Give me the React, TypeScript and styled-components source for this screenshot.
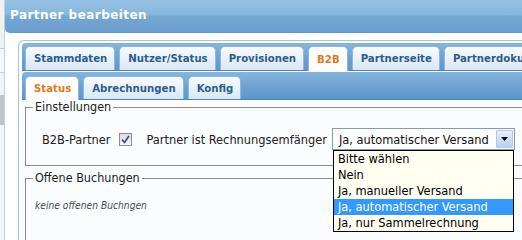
import React from "react";
import styled, { createGlobalStyle } from "styled-components";

const Global = createGlobalStyle`
  html, body { margin: 0; padding: 0; background: #fff; overflow: hidden; }
  body { font-family: "DejaVu Sans Condensed", "DejaVu Sans", Verdana, sans-serif; font-stretch: condensed; font-size: 12.7px; color: #1e1e1e; }
`;

const Page = styled.div`
  display: flex;
  width: 522px;
  height: 240px;
  overflow: hidden;
`;

const Backdrop = styled.div`
  width: 4px;
  flex: none;
  display: flex;
  flex-direction: column;
  background: #f3f3f3;
`;

const BackdropBand = styled.div<{ $h: number; $c: string }>`
  flex: none;
  height: ${(p) => p.$h}px;
  background: ${(p) => p.$c};
`;

const Dialog = styled.div`
  flex: 1;
  min-width: 0;
  display: flex;
  flex-direction: column;
  border-left: 1px solid #b9d3ea;
  background: #fff;
`;

const Header = styled.div`
  flex: none;
  height: 33px;
  box-sizing: border-box;
  padding: 8px 0 0 5px;
  border-bottom-left-radius: 5px;
  background: linear-gradient(180deg, #95c1e3 0%, #88b7de 45%, #73a7d4 52%, #6a9fd0 100%);
  border-bottom: 1px solid #6196c8;
  color: #fff;
  font-family: "DejaVu Sans", Verdana, sans-serif;
  font-stretch: normal;
  font-weight: bold;
  font-size: 12px;
  letter-spacing: 0.45px;
  line-height: 15px;
`;

const Body = styled.div`
  flex: 1;
  min-height: 0;
  padding: 7px 0 0 13px;
  display: flex;
  flex-direction: column;
`;

const TabWidget = styled.div`
  flex: 1;
  display: flex;
  flex-direction: column;
  border: 1px solid #a0c5e7;
  border-right: none;
  border-bottom: none;
  border-top-left-radius: 6px;
  padding: 2px 0 0 3px;
`;

const TabBar = styled.div<{ $top: number }>`
  flex: none;
  display: flex;
  align-items: flex-end;
  gap: 4px;
  height: 28px;
  box-sizing: border-box;
  padding: ${(p) => p.$top}px 0 0 3px;
  background: linear-gradient(180deg, #86b5df 0%, #6a9fd1 60%, #5f96cb 100%);
  border-top-left-radius: 4px;
  box-shadow: inset 0 -1px 0 #4a86c0;
  white-space: nowrap;
  overflow: hidden;
`;

const Tab = styled.div<{ $active?: boolean; $h: number }>`
  flex: none;
  box-sizing: border-box;
  height: ${(p) => (p.$active ? p.$h + 1 : p.$h)}px;
  margin-bottom: ${(p) => (p.$active ? 0 : 1)}px;
  padding: 0 7px 0 8px;
  display: flex;
  align-items: center;
  border: 1px solid #8fb8de;
  border-bottom: none;
  border-radius: 5px 5px 0 0;
  background: ${(p) => (p.$active ? "#fff" : "linear-gradient(180deg, #f8fbfe 0%, #e6eff9 60%, #d9e7f5 100%)")};
  color: ${(p) => (p.$active ? "#e8761d" : "#2d5d8e")};
  font-weight: bold;
  font-size: 11.3px;
`;

const Panel = styled.div`
  flex: 1;
  margin-top: 1px;
  display: flex;
  flex-direction: column;
`;

const Content = styled.div`
  flex: 1;
  background: #fafcfd;
  padding: 0 0 0 3px;
`;

const Group = styled.fieldset<{ $open?: boolean }>`
  margin: ${(p) => (p.$open ? "5px 0 0 0" : "0")};
  padding: 0 0 ${(p) => (p.$open ? 40 : 15)}px 7px;
  border: 1px solid #8d8d8d;
  border-right: none;
  ${(p) => (p.$open ? "border-bottom: none;" : "")}
  min-width: 0;
`;

const Caption = styled.legend`
  padding: 0 2px;
  font-size: 12.5px;
  line-height: 14px;
  color: #222;
`;

const FieldRow = styled.div`
  display: flex;
  align-items: center;
  height: 22px;
  margin-top: 14px;
  padding-left: 9px;
  white-space: nowrap;
`;

const Label = styled.span`
  color: #222;
`;

const CheckBox = styled.span`
  flex: none;
  width: 13px;
  height: 13px;
  box-sizing: border-box;
  margin: 0 14px 0 9px;
  border: 1px solid #8f8f8f;
  background: linear-gradient(180deg, #dcdcdc, #f7f7f7);
  display: flex;
  align-items: center;
  justify-content: center;
`;

const SelectWrap = styled.div`
  position: relative;
  flex: none;
  width: 183px;
  height: 22px;
  margin-left: 5px;
`;

const SelectBox = styled.div`
  box-sizing: border-box;
  height: 100%;
  display: flex;
  align-items: center;
  border: 1px solid #7f9db9;
  background: #fff;
  padding: 1px 1px 1px 6px;
  color: #111;
`;

const SelectValue = styled.span`
  flex: 1;
`;

const ArrowButton = styled.span`
  flex: none;
  width: 17px;
  height: 18px;
  box-sizing: border-box;
  border: 1px solid #b2cbe8;
  border-radius: 1px;
  background: linear-gradient(180deg, #e6f0fb 0%, #c9ddf4 60%, #b7d1f0 100%);
  display: flex;
  align-items: center;
  justify-content: center;
`;

const DropList = styled.div`
  position: absolute;
  top: 100%;
  left: 1px;
  width: 181px;
  box-sizing: border-box;
  border: 1px solid #000;
  background: #fffff2;
  z-index: 5;
`;

const Option = styled.div<{ $selected?: boolean }>`
  height: 16px;
  line-height: 16px;
  padding-left: 4px;
  background: ${(p) => (p.$selected ? "#3399ff" : "transparent")};
  color: ${(p) => (p.$selected ? "#fff" : "#000")};
`;

const Empty = styled.div`
  margin: 15px 0 0 2px;
  font-style: italic;
  font-size: 10.2px;
  color: #4a4a4a;
`;

const outerTabs = ["Stammdaten", "Nutzer/Status", "Provisionen", "B2B", "Partnerseite", "Partnerdokumente"];
const innerTabs = ["Status", "Abrechnungen", "Konfig"];
const options = ["Bitte wählen", "Nein", "Ja, manueller Versand", "Ja, automatischer Versand", "Ja, nur Sammelrechnung"];

export default function App() {
  return (
    <>
      <Global />
      <Page>
        <Backdrop>
          <BackdropBand $h={48} $c="#f1f1f1" />
          <BackdropBand $h={1} $c="#c9c9c9" />
          <BackdropBand $h={23} $c="#f7f7f7" />
          <BackdropBand $h={1} $c="#cfcfcf" />
          <BackdropBand $h={22} $c="#f4f4f4" />
          <BackdropBand $h={30} $c="#c4c4c4" />
          <BackdropBand $h={115} $c="#f6f6f6" />
        </Backdrop>
        <Dialog>
          <Header>Partner bearbeiten</Header>
          <Body>
            <TabWidget>
              <TabBar $top={3}>
                {outerTabs.map((t) => (
                  <Tab key={t} $h={24} $active={t === "B2B"}>
                    {t}
                  </Tab>
                ))}
              </TabBar>
              <Panel>
                <TabBar $top={4}>
                  {innerTabs.map((t) => (
                    <Tab key={t} $h={23} $active={t === "Status"}>
                      {t}
                    </Tab>
                  ))}
                </TabBar>
                <Content>
                  <Group>
                    <Caption>Einstellungen</Caption>
                    <FieldRow>
                      <Label>B2B-Partner</Label>
                      <CheckBox>
                        <svg width="9" height="9" viewBox="0 0 9 9">
                          <path d="M1 4.5 L3.5 7.5 L8 1" fill="none" stroke="#2849a8" strokeWidth="1.6" />
                        </svg>
                      </CheckBox>
                      <Label>Partner ist Rechnungsemfänger</Label>
                      <SelectWrap>
                        <SelectBox>
                          <SelectValue>Ja, automatischer Versand</SelectValue>
                          <ArrowButton>
                            <svg width="7" height="4" viewBox="0 0 7 4">
                              <path d="M0 0 H7 L3.5 4 Z" fill="#000" />
                            </svg>
                          </ArrowButton>
                        </SelectBox>
                        <DropList>
                          {options.map((o) => (
                            <Option key={o} $selected={o === "Ja, automatischer Versand"}>
                              {o}
                            </Option>
                          ))}
                        </DropList>
                      </SelectWrap>
                    </FieldRow>
                  </Group>
                  <Group $open>
                    <Caption>Offene Buchungen</Caption>
                    <Empty>keine offenen Buchngen</Empty>
                  </Group>
                </Content>
              </Panel>
            </TabWidget>
          </Body>
        </Dialog>
      </Page>
    </>
  );
}
